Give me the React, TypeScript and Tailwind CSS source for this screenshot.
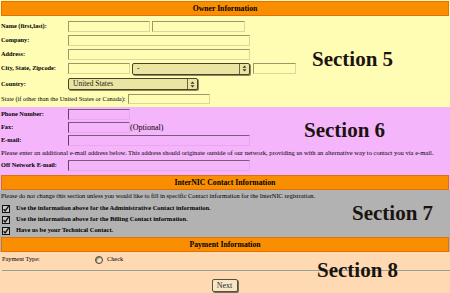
import type { ReactNode } from 'react';

const serif = "font-['Liberation_Serif','Times_New_Roman',serif]";

function Bar({ title }: { title: string }) {
    return (
        <div className="mx-px h-[15px] border border-[#e5700a] bg-[#f98f00] flex items-center justify-center">
            <span className="text-[7.7px] font-bold leading-none">{title}</span>
        </div>
    );
}

function Row({ h, label, children }: { h: string; label: string; children?: ReactNode }) {
    return (
        <div className={`flex items-center ${h}`}>
            <span className="w-[68px] shrink-0 pl-px text-[6.3px] font-bold leading-none whitespace-nowrap">{label}</span>
            {children}
        </div>
    );
}

// pale inset text box on the yellow block
function YBox({ w }: { w: string }) {
    return <div className={`${w} h-[11px] border border-t-[#9d9767] border-l-[#9d9767] border-b-[#dcd79d] border-r-[#dcd79d]`} />;
}

function PBox({ w }: { w: string }) {
    return <div className={`${w} h-[11px] border border-t-[#7c5a80] border-l-[#5e4262] border-b-[#e9a8ee] border-r-[#e9a8ee]`} />;
}

function Select({ w, value }: { w: string; value: string }) {
    return (
        <div className={`${w} h-[12px] flex rounded-[2px] border border-[#48432a] bg-[#ebe5a3] shadow-[1px_1px_0_#8d875a]`}>
            <span className="flex-1 pl-[4px] text-[7.5px] leading-[10px] text-[#24220f]">{value}</span>
            <div className="w-[10px] border-l border-[#6d6746] flex items-center justify-center">
                <svg width="5" height="7" viewBox="0 0 5 7">
                    <path d="M2.5 0.5L4.5 2.8H0.5Z M2.5 6.5L4.5 4.2H0.5Z" fill="#3a3620" />
                </svg>
            </div>
        </div>
    );
}

function Check({ label }: { label: string }) {
    return (
        <div className="h-[11px] flex items-center">
            <svg width="8" height="8" viewBox="0 0 8 8" className="ml-[2px] shrink-0">
                <rect x="0.5" y="0.5" width="7" height="7" fill="#c8c8c8" stroke="#111" />
                <path d="M1.6 4.2L3.2 6L6.6 1.2" fill="none" stroke="#111" strokeWidth="1.3" />
            </svg>
            <span className="ml-[6px] text-[6.45px] font-bold leading-none whitespace-nowrap">{label}</span>
        </div>
    );
}

const tag = "absolute text-[21px] font-bold leading-none text-[#1a1410] whitespace-nowrap";

export default function App() {
    return (
        <div className={`w-[450px] h-[293px] overflow-hidden bg-[#fffdb4] pt-px text-black ${serif}`}>
            <Bar title="Owner Information" />

            {/* Section 5 */}
            <section className="relative bg-[#fffdb4] pt-[3px] pb-px">
                <Row h="h-[14px]" label="Name (first,last):">
                    <YBox w="w-[82px]" />
                    <div className="ml-[2px]"><YBox w="w-[93px]" /></div>
                </Row>
                <Row h="h-[14px]" label="Company:">
                    <YBox w="w-[182px]" />
                </Row>
                <Row h="h-[14px]" label="Address:">
                    <YBox w="w-[182px]" />
                </Row>
                <Row h="h-[15px]" label="City, State, Zipcode:">
                    <YBox w="w-[62px]" />
                    <div className="ml-[2px]"><Select w="w-[118px]" value="-" /></div>
                    <div className="ml-[3px]"><YBox w="w-[43px]" /></div>
                </Row>
                <Row h="h-[16px]" label="Country:">
                    <Select w="w-[130px]" value="United States" />
                </Row>
                <div className="h-[14px] flex items-center gap-[2px] pl-px">
                    <span className="text-[6.4px] leading-none whitespace-nowrap">State (if other than the United States or Canada):</span>
                    <div className="h-[10px] w-[82px] border border-t-[#9d9767] border-l-[#9d9767] border-b-[#dcd79d] border-r-[#dcd79d]" />
                </div>
                <span className={`${tag} left-[312px] top-[33px]`}>Section 5</span>
            </section>

            {/* Section 6 */}
            <section className="relative bg-[#f5b5fa] pb-[3px]">
                <Row h="h-[14px]" label="Phone Number:">
                    <PBox w="w-[62px]" />
                </Row>
                <Row h="h-[13px]" label="Fax:">
                    <PBox w="w-[62px]" />
                    <span className="text-[8px] leading-none">(Optional)</span>
                </Row>
                <Row h="h-[13px]" label="E-mail:">
                    <PBox w="w-[182px]" />
                </Row>
                <div className="h-[12px] flex items-center pl-px">
                    <span className="text-[6.55px] leading-none whitespace-nowrap">
                        Please enter an additional e-mail address below. This address should originate outside of our network, providing us with an alternative way to contact you via e-mail.
                    </span>
                </div>
                <Row h="h-[13px]" label="Off Network E-mail:">
                    <PBox w="w-[182px]" />
                </Row>
                <span className={`${tag} left-[304px] top-[13px]`}>Section 6</span>
            </section>

            <div className="bg-[#f5b5fa]">
                <Bar title="InterNIC Contact Information" />
            </div>

            {/* Section 7 */}
            <section className="relative bg-[#b2b2b2] pb-px">
                <div className="h-[13px] flex items-center pl-px">
                    <span className="text-[6.4px] leading-none whitespace-nowrap">
                        Please do not change this section unless you would like to fill in specific Contact information for the InterNIC registration.
                    </span>
                </div>
                <Check label="Use the information above for the Administrative Contact information." />
                <Check label="Use the information above for the Billing Contact information." />
                <Check label="Have us be your Technical Contact." />
                <span className={`${tag} left-[352px] top-[13px]`}>Section 7</span>
            </section>

            <div className="bg-[#b2b2b2]">
                <Bar title="Payment Information" />
            </div>

            {/* Section 8 */}
            <section className="relative bg-[#ffd9b2] h-[41px]">
                <div className="h-[15px] flex items-center pl-[2px]">
                    <span className="w-[93px] text-[6.3px] leading-none">Payment Type:</span>
                    <div className="w-[8px] h-[8px] rounded-full border border-[#4b452e] bg-[#f3e2c4] shadow-[inset_1px_1px_1px_#8a7f5a]" />
                    <span className="ml-[4px] text-[6.3px] leading-none">Check</span>
                </div>
                <div className="mt-[3px] ml-[2px] border-t border-b border-t-[#a89c80] border-b-[#ece2cc]" />
                <div className="mt-[7px] flex justify-center">
                    <div className="ml-[-1px] w-[26px] h-[13px] rounded-[2px] border border-[#5a5232] bg-[#f6e7cb] shadow-[1px_1px_0_#7a7050] flex items-center justify-center">
                        <span className="text-[8px] leading-none text-[#2a2616]">Next</span>
                    </div>
                </div>
                <span className={`${tag} left-[317px] top-[8px]`}>Section 8</span>
            </section>
        </div>
    );
}
